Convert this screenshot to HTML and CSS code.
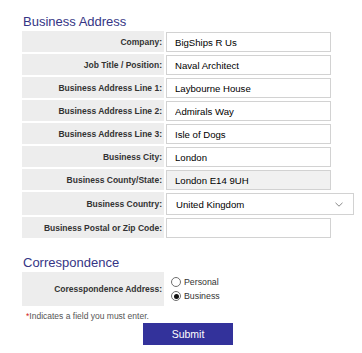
FILE: index.html
```html
<!DOCTYPE html>
<html>
<head>
<meta charset="utf-8">
<link rel="stylesheet" href="styles.css">
</head>
<body>
<form class="form">
  <h2 class="section-title">Business Address</h2>
  <div class="row"><label class="label">Company:</label><div class="control"><input class="field" type="text" value="BigShips R Us"></div></div>
  <div class="row"><label class="label">Job Title / Position:</label><div class="control"><input class="field" type="text" value="Naval Architect"></div></div>
  <div class="row"><label class="label">Business Address Line 1:</label><div class="control"><input class="field" type="text" value="Laybourne House"></div></div>
  <div class="row"><label class="label">Business Address Line 2:</label><div class="control"><input class="field" type="text" value="Admirals Way"></div></div>
  <div class="row"><label class="label">Business Address Line 3:</label><div class="control"><input class="field" type="text" value="Isle of Dogs"></div></div>
  <div class="row"><label class="label">Business City:</label><div class="control"><input class="field" type="text" value="London"></div></div>
  <div class="row"><label class="label">Business County/State:</label><div class="control"><input class="field field-readonly" type="text" value="London E14 9UH" readonly></div></div>
  <div class="row row-select"><label class="label">Business Country:</label><div class="control">
    <div class="select">
      <span class="select-value">United Kingdom</span>
      <svg class="chevron" width="8" height="5" viewBox="0 0 8 5"><path d="M0.5 0.8 L4 4.2 L7.5 0.8" fill="none" stroke="#7a7a7a" stroke-width="0.9"/></svg>
    </div>
  </div></div>
  <div class="row"><label class="label">Business Postal or Zip Code:</label><div class="control"><input class="field" type="text" value=""></div></div>

  <h2 class="section-title section-gap">Correspondence</h2>
  <div class="row row-radio"><label class="label">Coresspondence Address:</label>
    <div class="control radios">
      <label class="radio"><span class="radio-dot"></span>Personal</label>
      <label class="radio"><span class="radio-dot checked"></span>Business</label>
    </div>
  </div>
  <p class="note"><span class="req">*</span>Indicates a field you must enter.</p>
  <div class="actions"><button class="submit" type="button">Submit</button></div>
</form>
</body>
</html>
```
FILE: styles.css
```css
html, body {
  margin: 0;
  padding: 0;
  background: #ffffff;
}
body {
  font-family: "Liberation Sans", Arial, sans-serif;
  color: #333333;
}
.form {
  width: 332px;
  padding: 14px 0 0 22px;
}
.section-title {
  margin: 0 0 2px 1px;
  font-size: 13px;
  line-height: 15px;
  font-weight: normal;
  color: #353585;
}
.section-gap {
  margin-top: 17px;
}
.row {
  display: grid;
  grid-template-columns: 142px 1fr;
  column-gap: 2px;
  margin-bottom: 2px;
  height: 21px;
}
.row-select {
  height: 23px;
}
.row-radio {
  height: 34px;
}
.label {
  background: #ededed;
  display: flex;
  align-items: center;
  justify-content: flex-end;
  padding-right: 2px;
  font-size: 8.5px;
  font-weight: bold;
  color: #333333;
}
.control {
  display: flex;
  align-items: flex-start;
}
.field {
  box-sizing: border-box;
  width: 165px;
  height: 20px;
  margin: 1px 0 0 0;
  padding: 0 0 0 8px;
  border: 1px solid #d2d2d2;
  border-radius: 0;
  background: #ffffff;
  font-family: "Liberation Sans", Arial, sans-serif;
  font-size: 9.6px;
  color: #000000;
  outline: none;
}
.field-readonly {
  background: #f1f1f1;
}
.select {
  box-sizing: border-box;
  width: 188px;
  height: 22px;
  margin-top: 1px;
  border: 1px solid #d2d2d2;
  background: #ffffff;
  display: flex;
  align-items: center;
  justify-content: space-between;
  padding: 0 10px 0 9px;
  font-size: 9.6px;
  color: #000000;
}
.chevron {
  display: block;
}
.radios {
  flex-direction: column;
  justify-content: center;
  align-items: flex-start;
  padding-left: 5px;
}
.radio {
  display: flex;
  align-items: center;
  height: 14.5px;
  font-size: 8.8px;
  color: #333333;
}
.radio-dot {
  box-sizing: border-box;
  width: 10px;
  height: 10px;
  border: 1px solid #6f6f6f;
  border-radius: 50%;
  margin-right: 3px;
  display: flex;
  align-items: center;
  justify-content: center;
  background: #ffffff;
}
.radio-dot.checked::after {
  content: "";
  width: 5px;
  height: 5px;
  border-radius: 50%;
  background: #111111;
}
.note {
  margin: 5px 0 0 4px;
  font-size: 8.5px;
  line-height: 10px;
  color: #555555;
}
.req {
  color: #d22222;
}
.actions {
  display: flex;
  justify-content: center;
  margin-top: 2px;
}
.submit {
  width: 90px;
  height: 22px;
  border: none;
  background: #33329b;
  color: #ffffff;
  font-family: "Liberation Sans", Arial, sans-serif;
  font-size: 10.5px;
  padding: 0;
}
```
